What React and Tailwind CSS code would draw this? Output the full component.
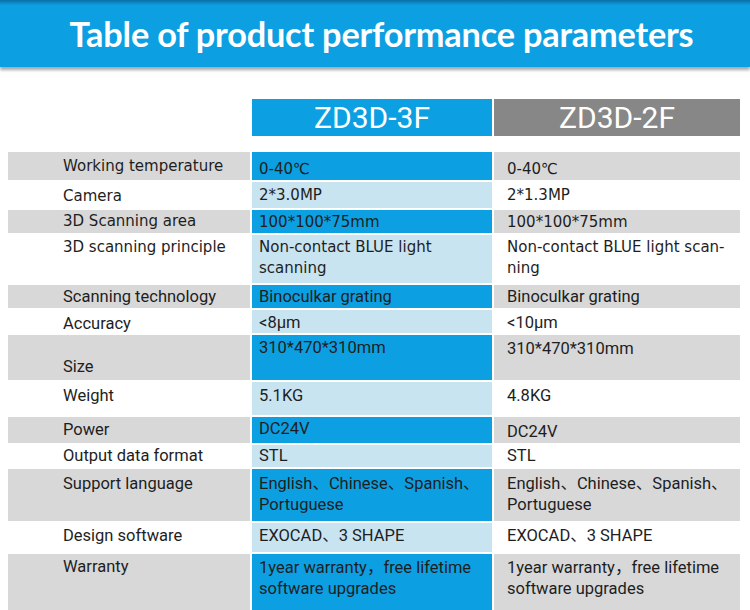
import React from 'react'

const rows = [
  { label: "Working temperature", a: "0-40℃", b: "0-40℃", h: "h-[28px]", lp: "pt-[4px]", ap: "pt-[7px]", bp: "pt-[7px]", dark: true, cond: false },
  { label: "Camera", a: "2*3.0MP", b: "2*1.3MP", h: "h-[26px]", lp: "pt-[4px]", ap: "pt-[3px]", bp: "pt-[3px]", dark: false, cond: false },
  { label: "3D Scanning area", a: "100*100*75mm", b: "100*100*75mm", h: "h-[23px]", lp: "pt-[1px]", ap: "pt-[2px]", bp: "pt-[2px]", dark: true, cond: false },
  { label: "3D scanning principle", a: ["Non-contact BLUE light", "scanning"], b: ["Non-contact BLUE light scan-", "ning"], h: "h-[48px]", lp: "pt-[2px]", ap: "pt-[2px]", bp: "pt-[2px]", dark: false, cond: false },
  { label: "Scanning technology", a: "Binoculkar grating", b: "Binoculkar grating", h: "h-[23px]", lp: "pt-[1px]", ap: "pt-[1px]", bp: "pt-[1px]", dark: true, cond: true },
  { label: "Accuracy", a: "<8μm", b: "<10μm", h: "h-[23px]", lp: "pt-[3px]", ap: "pt-[2px]", bp: "pt-[2px]", dark: false, cond: true },
  { label: "Size", a: "310*470*310mm", b: "310*470*310mm", h: "h-[45px]", lp: "pt-[21px]", ap: "pt-[2px]", bp: "pt-[3px]", dark: true, cond: true },
  { label: "Weight", a: "5.1KG", b: "4.8KG", h: "h-[33px]", lp: "pt-[3px]", ap: "pt-[3px]", bp: "pt-[3px]", dark: false, cond: true },
  { label: "Power", a: "DC24V", b: "DC24V", h: "h-[26px]", lp: "pt-[2px]", ap: "pt-[1px]", bp: "pt-[4px]", dark: true, cond: true },
  { label: "Output data format", a: "STL", b: "STL", h: "h-[22px]", lp: "pt-0", ap: "pt-0", bp: "pt-0", dark: false, cond: true },
  { label: "Support language", a: ["English、Chinese、Spanish、", "Portuguese"], b: ["English、Chinese、Spanish、", "Portuguese"], h: "h-[52px]", lp: "pt-[4px]", ap: "pt-[4px]", bp: "pt-[4px]", dark: true, cond: true },
  { label: "Design software", a: "EXOCAD、3 SHAPE", b: "EXOCAD、3 SHAPE", h: "h-[29px]", lp: "pt-[2px]", ap: "pt-[2px]", bp: "pt-[2px]", dark: false, cond: true },
  { label: "Warranty", a: ["1year warranty，free lifetime", "software upgrades"], b: ["1year warranty，free lifetime", "software upgrades"], h: "h-[56px]", lp: "pt-[2px]", ap: "pt-[3px]", bp: "pt-[3px]", dark: true, cond: true },
];

const Lines = ({ value }) =>
  Array.isArray(value) ? value.map((line, i) => <div key={i}>{line}</div>) : value;

const App = () => {
  return (
    <div className="w-[750px] h-[610px] overflow-hidden bg-white">
      {/* title band */}
      <div className="h-[67px] bg-gradient-to-b from-[#0a6fa6] via-[#0ca0e2] via-[8%] to-[#0ca0e2] shadow-[0_3px_3px_rgba(0,0,0,0.35)] flex items-center justify-center pl-[13px]">
        <h1 className="text-white font-bold text-[34.3px] tracking-[-0.2px] pt-[1px] font-['Lato','Noto_Sans',sans-serif]">
          Table of product performance parameters
        </h1>
      </div>

      {/* model header */}
      <div className="flex mt-[32px] ml-[252px] gap-[2px]">
        <div className="w-[240px] h-[37px] bg-[#0ca0e2] text-white text-[30px] leading-[37px] text-center font-['Roboto',sans-serif]">
          ZD3D-3F
        </div>
        <div className="w-[246px] h-[37px] bg-[#878787] text-white text-[30px] leading-[37px] text-center font-['Roboto',sans-serif]">
          ZD3D-2F
        </div>
      </div>

      {/* rows */}
      <div className="mt-[16px] ml-[8px] flex flex-col gap-[2px] text-[#1e1e1e] leading-[21px]">
        {rows.map((row, index) => {
          const font = row.cond
            ? "font-['Roboto','Noto_Sans_CJK_SC',sans-serif] text-[16.5px]"
            : "font-['DejaVu_Sans','Noto_Sans_CJK_SC',sans-serif] text-[15px]";
          return (
            <div key={index} className={`flex gap-[2px] ${row.h} ${font}`}>
              <div className={`w-[242px] pl-[55px] whitespace-nowrap ${row.lp} ${row.dark ? "bg-[#d8d8d8]" : "bg-white"}`}>
                {row.label}
              </div>
              <div className={`w-[240px] pl-[7px] whitespace-nowrap ${row.ap} ${row.dark ? "bg-[#0ca0e2]" : "bg-[#c9e4f1]"}`}>
                <Lines value={row.a} />
              </div>
              <div className={`w-[246px] pl-[13px] whitespace-nowrap ${row.bp} ${row.dark ? "bg-[#d8d8d8]" : "bg-white"}`}>
                <Lines value={row.b} />
              </div>
            </div>
          );
        })}
      </div>
    </div>
  )
}

export default App
